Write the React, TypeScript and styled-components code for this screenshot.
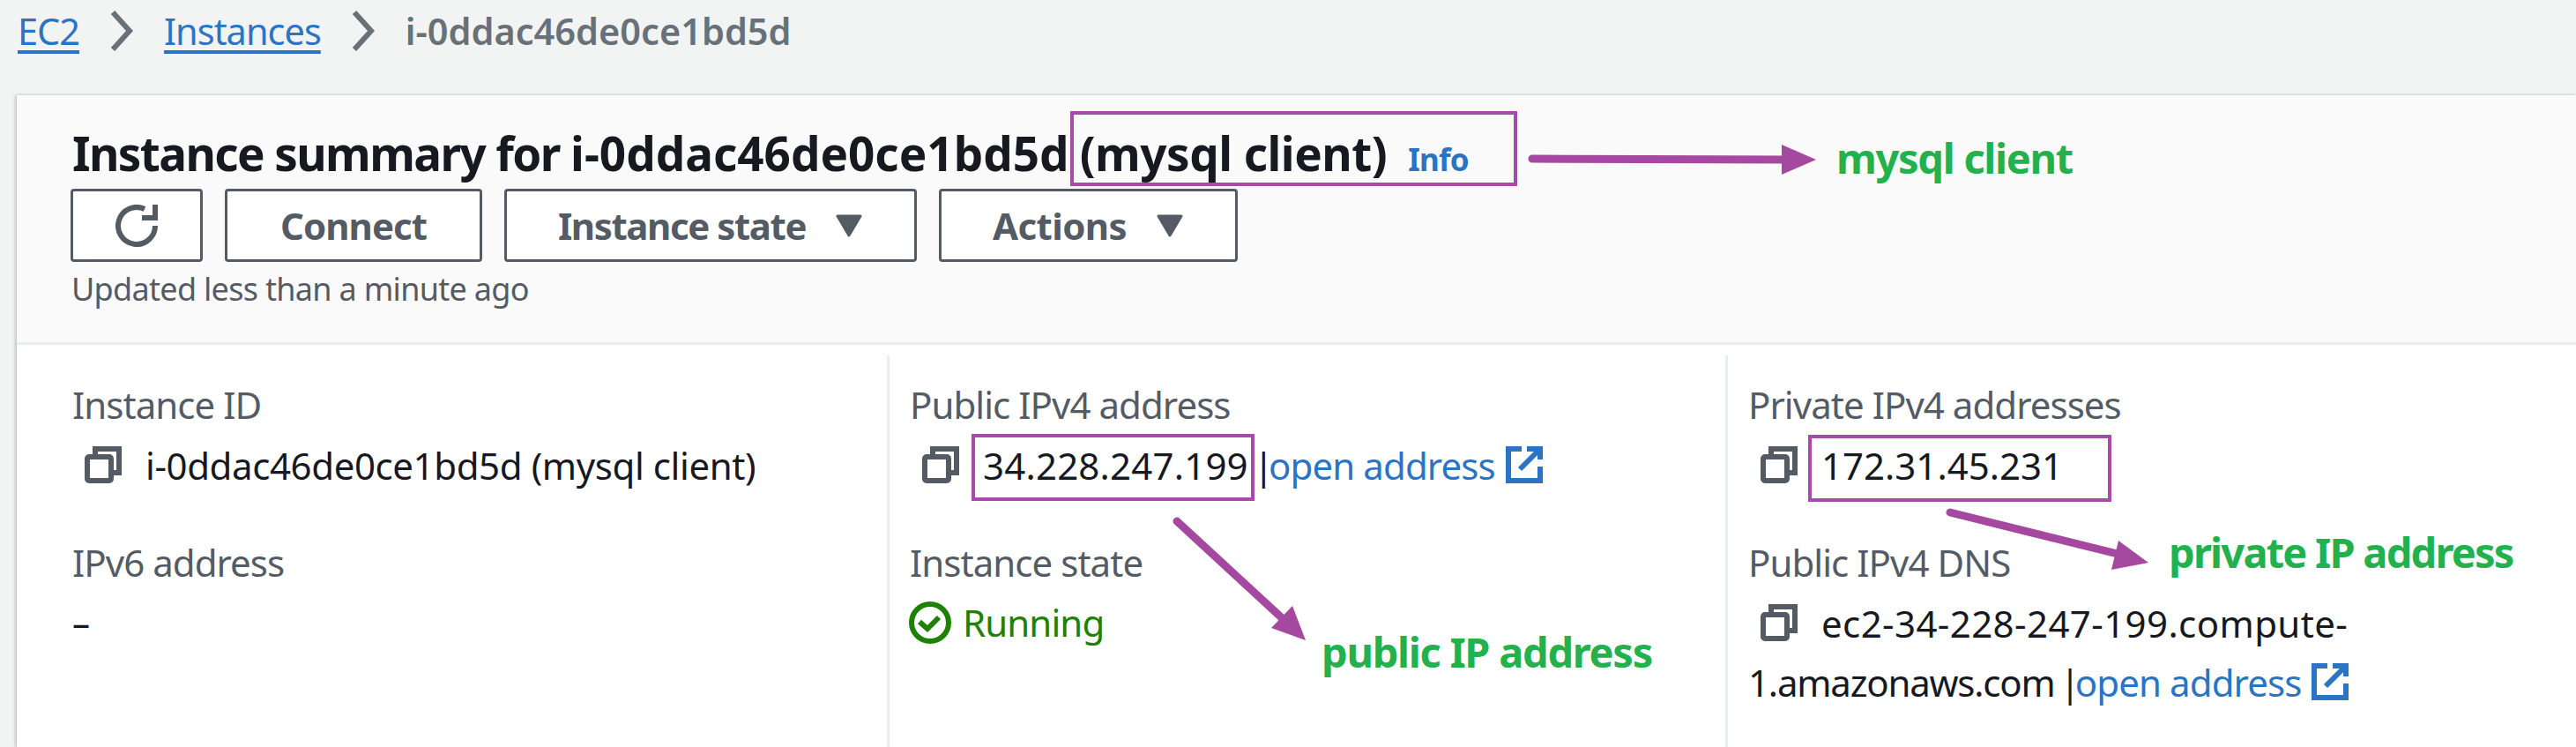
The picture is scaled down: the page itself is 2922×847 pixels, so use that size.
import React from "react";
import styled, { createGlobalStyle } from "styled-components";

const GlobalStyle = createGlobalStyle`
  html, body {
    margin: 0;
    padding: 0;
    background: #f2f3f3;
  }
`;

function App() {
  return (
    <Page>
      <GlobalStyle />
      <Breadcrumbs>
        <CrumbLink>EC2</CrumbLink>
        <Chevron />
        <CrumbLink>Instances</CrumbLink>
        <Chevron />
        <CurrentCrumb>i-0ddac46de0ce1bd5d</CurrentCrumb>
      </Breadcrumbs>
      <Card>
        <CardHeader>
          <TitleRow>
            <Title>
              Instance summary for <Tracked $tracking={0}>i-0ddac46de0ce1bd5d</Tracked>{" "}
              <Tracked $tracking={-0.5}>(mysql client)</Tracked>
            </Title>
            <InfoLink>Info</InfoLink>
          </TitleRow>
          <Toolbar>
            <ToolButton $width={150}>
              <RefreshIcon />
            </ToolButton>
            <ToolButton $width={292}>Connect</ToolButton>
            <ToolButton $width={468}>
              <Tracked $tracking={-1.4}>Instance state</Tracked> <Caret />
            </ToolButton>
            <ToolButton $width={339}>
              <Tracked $tracking={-0.6}>Actions</Tracked> <Caret />
            </ToolButton>
          </Toolbar>
          <Updated>Updated less than a minute ago</Updated>
        </CardHeader>
        <Columns>
          <Column>
            <Field>
              <Label>Instance ID</Label>
              <CopyRow>
                <CopyIcon />
                <Tracked $tracking={-0.4}>i-0ddac46de0ce1bd5d (mysql client)</Tracked>
              </CopyRow>
            </Field>
            <Field>
              <Label>IPv6 address</Label>
              <PlainValue>–</PlainValue>
            </Field>
          </Column>
          <Column>
            <Field>
              <Label>Public IPv4 address</Label>
              <CopyRow>
                <CopyIcon />
                <Tracked $tracking={0.2}>34.228.247.199</Tracked>
                <OpenAddress />
              </CopyRow>
            </Field>
            <Field>
              <Label>Instance state</Label>
              <Status>
                <RunningIcon />
                Running
              </Status>
            </Field>
          </Column>
          <Column>
            <Field>
              <Label>Private IPv4 addresses</Label>
              <CopyRow>
                <CopyIcon />
                <Tracked $tracking={0}>172.31.45.231</Tracked>
              </CopyRow>
            </Field>
            <Field>
              <Label>Public IPv4 DNS</Label>
              <CopyRow>
                <CopyIcon />
                <Tracked $tracking={0.4}>ec2-34-228-247-199.compute-</Tracked>
              </CopyRow>
              <WrappedValue>
                1.amazonaws.com
                <OpenAddress />
              </WrappedValue>
            </Field>
          </Column>
        </Columns>
      </Card>

      <MarkBox $left={1214} $top={126} $width={507} $height={85} />
      <MarkBox $left={1102} $top={492} $width={321} $height={76} />
      <MarkBox $left={2051} $top={493} $width={344} $height={76} />
      <ArrowLayer viewBox="0 0 2922 847">
        <ArrowShaft d="M1738 180 L2030 181" />
        <ArrowHead points="2021,164 2060,181 2021,198" />
        <ArrowShaft d="M1335 591 L1462 708" />
        <ArrowHead points="1466,687 1481,726 1442,712" />
        <ArrowShaft d="M2212 581 L2410 630" />
        <ArrowHead points="2403,613 2437,638 2395,646" />
      </ArrowLayer>
      <Note $left={2083} $top={150} $tracking={-1.3}>mysql client</Note>
      <Note $left={1499} $top={710} $tracking={-1.3}>public IP address</Note>
      <Note $left={2460} $top={597} $tracking={-1.8}>private IP address</Note>
    </Page>
  );
}

function Chevron() {
  return (
    <ChevronSvg viewBox="0 0 26 46">
      <path d="M3 2 L22 23 L3 44" />
    </ChevronSvg>
  );
}

function Caret() {
  return (
    <CaretSvg viewBox="0 0 32 26">
      <path d="M3 2 H29 L16 24 Z" />
    </CaretSvg>
  );
}

function RefreshIcon() {
  return (
    <svg width="48" height="48" viewBox="0 0 48 48" fill="none" stroke="#545b64" strokeWidth="6">
      <path d="M45 24 A21 21 0 1 1 33 5" />
      <path d="M45 0 V15 H30" />
    </svg>
  );
}

function CopyIcon() {
  return (
    <CopySvg viewBox="0 0 42 42">
      <rect x="3" y="12" width="27" height="27" rx="2" />
      <path d="M12 9 V3 H39 V30 H33" />
    </CopySvg>
  );
}

function OpenAddress() {
  return (
    <>
      <Pipe>|</Pipe>
      <AddressLink>open address</AddressLink>
      <ExternalSvg viewBox="0 0 42 42">
        <path d="M18 3 H3 V39 H39 V23" />
        <path d="M24 3 H39 V15" />
        <path d="M16 26 L36 6" />
      </ExternalSvg>
    </>
  );
}

function RunningIcon() {
  return (
    <RunningSvg viewBox="0 0 48 48">
      <circle cx="24" cy="24" r="21" />
      <path d="M12 23 L21 31 L34 18" />
    </RunningSvg>
  );
}

const fontStack = `"Noto Sans", "Open Sans", sans-serif`;

const Page = styled.div`
  position: relative;
  width: 2922px;
  height: 847px;
  overflow: hidden;
  background: #f2f3f3;
  font-family: ${fontStack};
`;

const Breadcrumbs = styled.nav`
  display: flex;
  align-items: center;
  height: 70px;
  padding-left: 20px;
  font-size: 41.5px;
  box-sizing: border-box;
`;

const CrumbLink = styled.a`
  color: #2b74c4;
  letter-spacing: -1px;
  text-decoration: underline;
  text-underline-offset: 6px;
  text-decoration-thickness: 4px;
`;

const CurrentCrumb = styled.span`
  color: #687078;
  font-weight: 600;
`;

const ChevronSvg = styled.svg`
  width: 26px;
  height: 46px;
  margin: 0 35px;
  fill: none;
  stroke: #687078;
  stroke-width: 6;
`;

const Card = styled.section`
  margin: 38px 0 0 19px;
  height: 739px;
  background: #fff;
  box-shadow: -2px 0 3px #bfc3c7, 0 -2px 0 #e9ebeb;
`;

const CardHeader = styled.header`
  height: 283px;
  padding: 36px 0 0 63px;
  background: #fafafa;
  border-bottom: 3px solid #eaeded;
  box-sizing: border-box;
`;

const TitleRow = styled.div`
  display: flex;
  align-items: baseline;
  height: 70px;
`;

const Title = styled.h1`
  margin: 0;
  font-size: 53px;
  line-height: 60px;
  font-weight: 700;
  letter-spacing: -1.6px;
  color: #16191f;
`;

const Tracked = styled.span<{ $tracking: number }>`
  letter-spacing: ${(p) => p.$tracking}px;
`;

const InfoLink = styled.a`
  margin-left: 24px;
  font-size: 35px;
  font-weight: 700;
  letter-spacing: -0.8px;
  color: #2b74c4;
`;

const Toolbar = styled.div`
  display: flex;
  gap: 25px;
  margin-left: -2px;
`;

const ToolButton = styled.button<{ $width: number }>`
  display: flex;
  align-items: center;
  justify-content: center;
  gap: 33px;
  width: ${(p) => p.$width}px;
  height: 83px;
  padding: 0;
  box-sizing: border-box;
  background: #fff;
  border: 3px solid #545b64;
  border-radius: 4px;
  color: #545b64;
  font-size: 42px;
  font-weight: 700;
  letter-spacing: -1px;
  font-family: ${fontStack};
`;

const CaretSvg = styled.svg`
  width: 32px;
  height: 26px;
  fill: #545b64;
  stroke: #545b64;
  stroke-width: 3;
  stroke-linejoin: round;
`;

const Updated = styled.div`
  margin: 9px 0 0 -1px;
  font-size: 36px;
  line-height: 44px;
  letter-spacing: -0.7px;
  color: #545b64;
`;

const Columns = styled.div`
  display: grid;
  grid-template-columns: 987px 951px 1fr;
  padding-top: 12px;
  height: 456px;
  box-sizing: border-box;
`;

const Column = styled.div`
  padding: 31px 0 0 63px;
  & + & {
    padding-left: 23px;
    border-left: 3px solid #eaeded;
  }
`;

const Field = styled.div`
  height: 179px;
`;

const Label = styled.div`
  font-size: 42px;
  line-height: 50px;
  letter-spacing: -0.95px;
  color: #545b64;
`;

const CopyRow = styled.div`
  display: flex;
  align-items: center;
  height: 68px;
  margin-top: 9px;
  font-size: 42px;
  color: #16191f;
  white-space: nowrap;
`;

const CopySvg = styled.svg`
  flex: none;
  width: 42px;
  height: 42px;
  margin: 0 27px 0 14px;
  fill: none;
  stroke: #545b64;
  stroke-width: 6;
`;

const PlainValue = styled.div`
  margin-top: 9px;
  font-size: 40px;
  line-height: 68px;
  color: #16191f;
`;

const Status = styled.div`
  display: flex;
  align-items: center;
  gap: 13px;
  margin-top: 9px;
  font-size: 42px;
  line-height: 68px;
  letter-spacing: -0.9px;
  color: #1d8102;
`;

const RunningSvg = styled.svg`
  flex: none;
  width: 48px;
  height: 48px;
  margin-left: -1px;
  fill: none;
  stroke: #1d8102;
  stroke-width: 6;
`;

const Pipe = styled.span`
  margin-left: 6px;
  letter-spacing: -6px;
  color: #16191f;
`;

const AddressLink = styled.a`
  letter-spacing: -0.9px;
  color: #2b74c4;
`;

const ExternalSvg = styled.svg`
  flex: none;
  width: 42px;
  height: 42px;
  margin-left: 12px;
  fill: none;
  stroke: #2b74c4;
  stroke-width: 6;
`;

const WrappedValue = styled.div`
  display: flex;
  align-items: center;
  height: 66px;
  font-size: 42px;
  letter-spacing: -1.2px;
  color: #16191f;
  white-space: nowrap;
`;

const MarkBox = styled.div<{ $left: number; $top: number; $width: number; $height: number }>`
  position: absolute;
  left: ${(p) => p.$left}px;
  top: ${(p) => p.$top}px;
  width: ${(p) => p.$width}px;
  height: ${(p) => p.$height}px;
  box-sizing: border-box;
  border: 4px solid #a64ca6;
`;

const ArrowLayer = styled.svg`
  position: absolute;
  left: 0;
  top: 0;
  width: 2922px;
  height: 847px;
  pointer-events: none;
`;

const ArrowShaft = styled.path`
  fill: none;
  stroke: #a5489f;
  stroke-width: 9;
  stroke-linecap: round;
`;

const ArrowHead = styled.polygon`
  fill: #a5489f;
`;

const Note = styled.div<{ $left: number; $top: number; $tracking: number }>`
  position: absolute;
  left: ${(p) => p.$left}px;
  top: ${(p) => p.$top}px;
  font-size: 47px;
  line-height: 58px;
  font-weight: 700;
  letter-spacing: ${(p) => p.$tracking}px;
  color: #22b14c;
  white-space: nowrap;
`;

export default App;
